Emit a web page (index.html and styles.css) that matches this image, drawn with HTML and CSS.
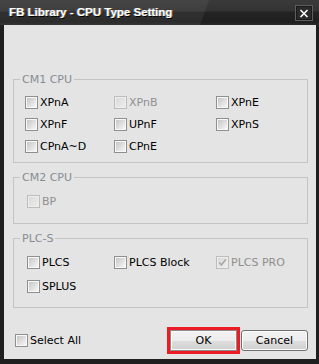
FILE: index.html
```html
<!DOCTYPE html>
<html>
<head>
<meta charset="utf-8">
<link rel="stylesheet" href="styles.css">
</head>
<body>
<div class="window">
  <div class="titlebar">
    <span class="title">FB Library - CPU Type Setting</span>
    <span class="close"><svg width="10" height="9" viewBox="0 0 10 9"><path d="M1.5 1 L8.5 8 M8.5 1 L1.5 8" stroke="#fff" stroke-width="1.6" fill="none"/></svg></span>
  </div>
  <div class="client">
    <div class="group g1">
      <span class="legend">CM1 CPU</span>
      <label class="item"><span class="cb"></span>XPnA</label>
      <label class="item dis"><span class="cb"></span>XPnB</label>
      <label class="item"><span class="cb"></span>XPnE</label>
      <label class="item"><span class="cb"></span>XPnF</label>
      <label class="item"><span class="cb"></span>UPnF</label>
      <label class="item"><span class="cb"></span>XPnS</label>
      <label class="item"><span class="cb"></span>CPnA~D</label>
      <label class="item"><span class="cb"></span>CPnE</label>
    </div>
    <div class="group g2">
      <span class="legend">CM2 CPU</span>
      <label class="item dis"><span class="cb"></span>BP</label>
    </div>
    <div class="group g3">
      <span class="legend">PLC-S</span>
      <label class="item"><span class="cb"></span>PLCS</label>
      <label class="item"><span class="cb"></span>PLCS Block</label>
      <label class="item dis"><span class="cb"><svg width="9" height="9" viewBox="0 0 9 9"><path d="M1.2 4.6 L3.4 6.9 L7.8 1.6" stroke="#a3a3a3" stroke-width="1.5" fill="none"/></svg></span>PLCS PRO</label>
      <label class="item"><span class="cb"></span>SPLUS</label>
    </div>
    <div class="footer">
      <label class="item"><span class="cb"></span>Select All</label>
      <span class="btn ok">OK</span>
      <span class="btn">Cancel</span>
    </div>
  </div>
</div>
</body>
</html>
```
FILE: styles.css
```css
* { box-sizing: border-box; }
html, body { margin: 0; padding: 0; }
body {
  background: #1e1e1e;
  font-family: "DejaVu Sans", "Liberation Sans", sans-serif;
  font-size: 11px;
  color: #000;
}
.window {
  width: 319px;
  height: 364px;
  display: flex;
  flex-direction: column;
  background: #1f1f1f;
}
.titlebar {
  height: 25px;
  flex: none;
  display: flex;
  align-items: flex-start;
  position: relative;
  background: linear-gradient(to bottom, #3a3a3a 0, #333 11px, #242424 12px, #1f1f1f 22px, #2a2a2a 25px);
}
.titlebar::before {
  content: "";
  position: absolute;
  left: 0; top: 0; bottom: 0;
  width: 210px;
  background: rgba(255,255,255,0.06);
  clip-path: polygon(0 0, 209px 0, 200px 100%, 0 100%);
}
.title {
  position: relative;
  margin: 5px 0 0 9px;
  font-family: "Liberation Sans", Arial, sans-serif;
  font-weight: bold;
  font-size: 11.5px;
  line-height: 14px;
  color: #fff;
  text-shadow: -1px 0 0 rgba(70,150,255,0.55), 1px 0 0 rgba(255,170,40,0.6), 1px 1px 0 #000;
}
.close {
  position: relative;
  margin: 5px 6px 0 auto;
  width: 18px;
  height: 16px;
  border: 1px solid #5e5e5e;
  background: #2b2b2b;
  box-shadow: inset 0 0 0 1px #1a1a1a;
  display: flex;
  align-items: center;
  justify-content: center;
}
.client {
  flex: 1;
  margin: 0 3px 5px 4px;
  background: #e4e4e4;
  padding: 0 8px 0 9px;
  display: flex;
  flex-direction: column;
}
.group {
  position: relative;
  border: 1px solid #c4c4c4;
  display: grid;
}
.legend {
  position: absolute;
  top: -7px;
  left: 6px;
  padding: 0 2px;
  background: #e4e4e4;
  line-height: 13px;
  color: #868c94;
}
.g1 {
  margin-top: 54px;
  padding: 16px 0 9px 11px;
  grid-template-columns: 89px 102px auto;
  row-gap: 9px;
}
.g2 {
  margin-top: 14px;
  padding: 17px 0 15px 13px;
}
.g3 {
  margin-top: 14px;
  padding: 17px 0 14px 13px;
  grid-template-columns: 87px 102px auto;
  row-gap: 11px;
}
.item {
  display: flex;
  align-items: center;
  height: 13px;
  line-height: 13px;
  white-space: nowrap;
}
.cb {
  flex: none;
  width: 13px;
  height: 13px;
  margin-right: 2px;
  border: 1px solid #8e8f8f;
  padding: 1px;
  background: linear-gradient(135deg, #c6c6c6, #f6f6f6) content-box, #f8f8f8;
  display: flex;
  align-items: center;
  justify-content: center;
}
.cb svg { margin: -1px; }
.dis { color: #8f8f8f; }
.dis .cb {
  border-color: #bdbdbd;
  background: linear-gradient(135deg, #dadada, #ececec) content-box, #eeeeee;
}
.footer {
  margin-top: 22px;
  padding-left: 2px;
  display: flex;
  align-items: center;
  height: 21px;
}
.footer .item { margin-right: auto; }
.btn {
  width: 67px;
  height: 21px;
  border: 1px solid #707070;
  border-radius: 3px;
  background: linear-gradient(to bottom, #f3f3f3 0%, #ececec 50%, #dedede 50%, #d0d0d0 100%);
  box-shadow: inset 0 0 0 1px #fbfbfb;
  display: flex;
  align-items: center;
  justify-content: center;
  font-size: 11px;
}
.ok {
  margin-right: 4px;
  outline: 3px solid #ed1c24;
  border-color: #8a8a8a;
  border-radius: 0;
}
```
